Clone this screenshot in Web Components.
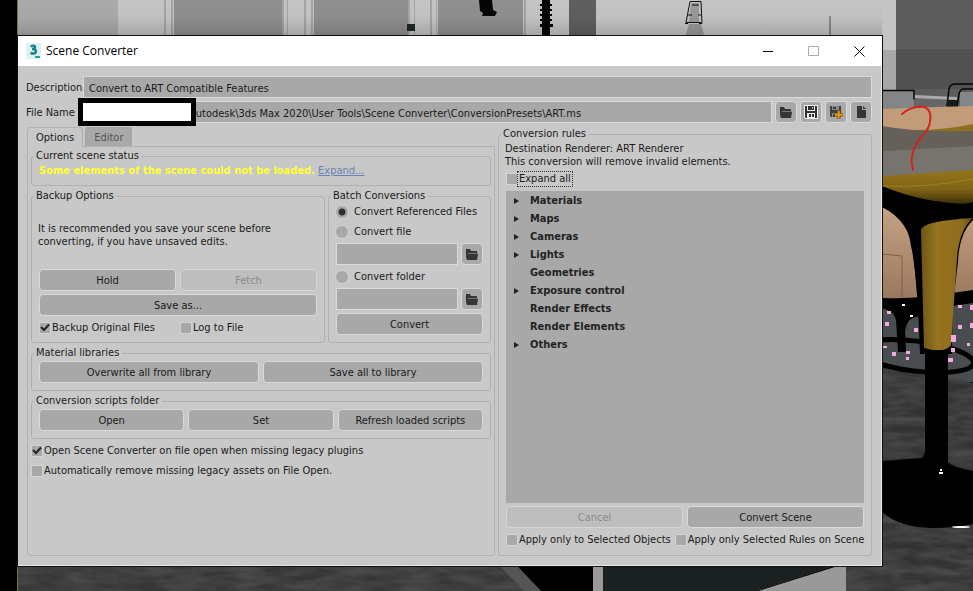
<!DOCTYPE html>
<html lang="en">
<head>
<meta charset="utf-8">
<title>Scene Converter</title>
<style>
html, body { height: 100%; }
body { margin: 0; background: #000; color: #1a1a1a; font: 11px/14px "DejaVu Sans Condensed", "DejaVu Sans", "Liberation Sans", sans-serif; }
</style>
</head>
<body>
<scene-desktop>
  <scene-window heading="Scene Converter">
    <converter-form></converter-form>
  </scene-window>
</scene-desktop>
<script>
function define(name, html, setup) {
  const template = document.createElement('template');
  template.innerHTML = '<style>*{box-sizing:border-box}</style>' + html;
  customElements.define(name, class extends HTMLElement {
    connectedCallback() {
      if (this.shadowRoot) return;
      this.attachShadow({ mode: 'open' }).append(template.content.cloneNode(true));
      if (setup) setup(this, this.shadowRoot);
    }
  });
}

/* Rendered viewport behind the dialog */
define('viewport-backdrop', `
<style>
:host { display: block; overflow: hidden; }
svg { display: block; width: 100%; height: 100%; }
</style>
<svg viewBox="0 0 973 591" preserveAspectRatio="xMinYMin slice" aria-hidden="true">
  <defs>
    <linearGradient id="shade" x2="0" y2="1"><stop offset="0" stop-opacity="0"/><stop offset=".5" stop-opacity=".02"/><stop offset="1" stop-opacity=".16"/></linearGradient>
    <linearGradient id="leg"><stop offset="0" stop-color="#6e5617"/><stop offset=".3" stop-color="#95731f"/><stop offset=".8" stop-color="#8d6c1c"/><stop offset="1" stop-color="#5e4812"/></linearGradient>
    <linearGradient id="seat" x2="0" y2="1"><stop offset="0" stop-color="#94741c"/><stop offset=".55" stop-color="#806316"/><stop offset="1" stop-color="#3a2c0a"/></linearGradient>
    <linearGradient id="wood" x2="0" y2="1"><stop offset="0" stop-color="#c6a283"/><stop offset="1" stop-color="#9a785e"/></linearGradient>
    <filter id="stone" x="0" y="0" width="100%" height="100%">
      <feTurbulence type="fractalNoise" baseFrequency=".03 .12" numOctaves="4" seed="8"/>
      <feColorMatrix values="0 0 0 0 .08  0 0 0 0 .08  0 0 0 0 .08  1.6 0 0 0 -.45"/>
      <feComposite in2="SourceGraphic" operator="in"/>
    </filter>
  </defs>
  <rect width="973" height="591" fill="#000"/>
  <path fill="#c4c4c4" d="M18 0h878v110H18z"/>
  <path fill="#aaa" d="M18 0h100v40H18z"/>
  <path fill="#8f8f8f" d="M174 0h108v40H174zM314 0h94v40h-94zM438 0h85v40h-85z"/>
  <path fill="#a4a4a4" d="M164 0h2v40h-2zM171 0h2v40h-2zM282 0h2v40h-2zM287 0h1v40h-1zM304 0h2v40h-2zM311 0h2v40h-2zM408 0h2v40h-2zM414 0h1v40h-1zM430 0h2v40h-2zM436 0h1v40h-1zM524 0h2v40h-2z"/>
  <path fill="#5f5f5f" d="M569 0h27v40h-27z"/>
  <rect x="407" y="24" width="8" height="7" fill="#1f2b22"/>
  <path fill="#050505" d="M479 0h13l1 10 4 2-2 4h-13l1-3-3-2zM542 0h8v24h3v3h-3v10h-8V27h-2v-3h2z"/>
  <path stroke="#050505" stroke-width="2" d="M540 5h12M540 10h12M540 15h12M540 20h12"/>
  <path fill="#999" d="M689 24h12l4 14h-20z"/>
  <path fill="#999" d="M691 3h8v19h-10z"/>
  <path fill="none" stroke="#111" d="M690 1.500h11l1 22M690 1.500l-4 21h15M688 15h4m6 0h3M692 5h7M685 23.500h3m11 0h3"/>
  <path fill="#888" d="M829 16h2v21h-2z"/>
  <path fill="#5d5d5d" d="M896 0h77v110h-77z"/>
  <path fill="#515151" d="M896 49h77v40h-77z"/>
  <path fill="#a8a8a8" d="M882 50h14v40h-14z"/>
  <path fill="url(#shade)" d="M18 0h864v36H18z"/>
  <path fill="#77773f" d="M17 0h1v591h-1z"/>
  <path fill="#838586" d="M882 91h32v18h-32zM960 92h13v18h-13z"/>
  <path fill="#666" d="M914 97h45v12h-45z"/>
  <path fill="#aaa" d="M914 95l43 2v3l-43-2z"/>
  <path fill="none" stroke="#050505" stroke-width="1.500" d="M882 90.500h32v9M947 106l2-17q1-5 6-5h18M957 107l2-13q1-5 5-5h9"/>
  <path fill="#191919" d="M947 100h10v7h-10z"/>
  <path fill="#c19b7a" d="M882 109q45-2 91-3v20q-40 9-60 5l-31-4z"/>
  <path fill="#8d701f" d="M915 130q30 0 58-6v14h-58z"/>
  <path fill="#66605a" d="M882 126q38 7 91 5v30l-91 0z"/>
  <path fill="#77736e" d="M882 151l91-5v27l-91 5z"/>
  <path fill="url(#seat)" d="M882 176l91-6v35q-45 0-91-19z"/>
  <path fill="none" stroke="#a08022" d="M882 186q45 2 91-7"/>
  <path d="M882 187q45 17 91 17v16l-91 5z"/>
  <path fill="#494d50" d="M882 300h91v82h-91z"/>
  <path fill="url(#wood)" d="M882 207q28 14 31 45l5 48-35-2zM973 220q-14 14-15 42l-4 33 19-3z"/>
  <path fill="none" stroke="#796150" d="M882 254l20 2v44"/>
  <path fill="#000" d="M882 299l42-2v20q-17-3-19 15l1 20h-8l-2-32q-2-9-14-12zM952 293l21-3v13l-21 3z"/>
  <path fill="#333" d="M882 364l91 19v208h-91z"/>
  <path fill="#333" filter="url(#stone)" d="M882 364l91 19v208h-91z"/>
  <ellipse cx="915" cy="356" rx="59" ry="15" fill="none" stroke="#000" stroke-width="5" transform="rotate(7 915 356)"/>
  <path d="M882 190l51 22 40-10v18q-18 12-20 40l-1 94h-32q-3-84-9-108-4-31-29-40z"/>
  <path fill="url(#leg)" d="M921 230q1-9 52-12-14 12-16 40l-6 87q-6 9-27 3z"/>
  <path d="M925 350h23v112q4 5 25 9v53q-64 12-91-12v-51l39-3q4-2 4-8z"/>
  <path fill="#f2aadf" d="M885 322h4v4h-4zM887 311h4v3h-4zM914 328h4v4h-4zM892 352h4v4h-4zM906 351h4v3h-4zM906 357h3v3h-3zM958 305h4v3h-4zM970 305h3v5h-3zM958 325h4v4h-4zM970 323h3v5h-3zM951 335h5v7h-5zM967 343h3v3h-3zM951 348h4v4h-4zM948 358h5v4h-5zM883 346h4v2h-4z"/>
  <path fill="#fff" d="M902 304h3v2h-3zM910 315h3v2h-3zM940 469h2v2h-2zM939 472h4v2h-4z"/>
  <ellipse cx="961" cy="527" rx="9" ry="1" fill="#fff"/>
  <path fill="none" stroke="#d3241b" stroke-width="2" stroke-linecap="round" d="M902 114q10-9 22-7c8 2 8 14 3 23-5 6-9 10-13 19-3 9-3 12-1 21"/>
  <path fill="#373737" d="M18 566h499l24 25H18zM845 566h40v25h-40z"/>
  <path fill="#333" filter="url(#stone)" d="M18 566h499l24 25H18zM845 566h40v25h-40z"/>
  <path fill="#555" d="M500 566h17l24 25h-17z"/>
  <path fill="#000" d="M518 566h76v25h-52z"/>
  <path fill="#999" d="M593 566h10v25h-10zM758 591l80-25h8v25z"/>
  <path fill="#1b2021" d="M603 566h232l-77 25H603z"/>
</svg>`);

define('scene-desktop', `
<style>
:host { display: block; position: relative; min-height: 100%; }
viewport-backdrop { position: absolute; inset: 0; }
.area { position: relative; min-height: 100vh; padding: 35px 90px 24px 17px; display: flex; }
.area ::slotted(*) { flex: 1; min-width: 0; }
</style>
<viewport-backdrop></viewport-backdrop>
<div class="area"><slot></slot></div>`);

define('scene-window', `
<style>
:host { display: flex; flex-direction: column; background: #c8c8c8; border: 1px solid #111; }
header { display: flex; align-items: center; height: 30px; background: #fff; color: #000; padding-left: 8px; flex: none; }
h1 { flex: 1; margin: 0; padding-left: 5px; font: 12px/16px "Open Sans", "Noto Sans", sans-serif; }
button { width: 46px; height: 30px; padding: 0; border: 0; background: none; display: grid; place-items: center; }
svg { display: block; }
main { flex: 1; display: flex; border: 1px solid #e6e6e6; border-width: 0 1px 1px 0; }
main ::slotted(*) { flex: 1; min-width: 0; }
</style>
<header>
  <svg width="15" height="16" viewBox="0 0 15 16" aria-hidden="true"><path fill="#dff1f1" d="M0 0h15v16H0z"/><path fill="none" stroke="#12858a" stroke-width="2.400" d="M4.500 3.500q4.500-2 4.500.500 0 2-3 2 4 0 4 2.500 0 3-5.500 1.500"/><path fill="#25a3a0" d="M9 13h5v2H9z"/></svg>
  <h1></h1>
  <button aria-label="Minimize"><svg width="11" height="11"><path stroke="#000" d="M1 5.500h10"/></svg></button>
  <button aria-label="Maximize" disabled><svg width="11" height="11"><path fill="none" stroke="#aaa" d="M.5.5h10v9h-10z"/></svg></button>
  <button aria-label="Close"><svg width="11" height="11"><path stroke="#000" d="M.5.5l10 10m0-10l-10 10"/></svg></button>
</header>
<main><slot></slot></main>`, (host, root) => {
  root.querySelector('h1').textContent = host.getAttribute('heading');
});

define('ui-button', `
<style>
:host { display: block; min-width: 0; }
button { display: block; width: 100%; height: 22px; padding: 1px 0 0; border: 1px solid #dadada; border-radius: 4px; background: #a8a8a8; color: #1a1a1a; font: inherit; text-align: center; }
button:disabled { background: #bebebe; border-color: #d6d6d6; color: #8a8a8a; }
</style>
<button><slot></slot></button>`, (host, root) => {
  root.querySelector('button').disabled = host.hasAttribute('disabled');
});

const icons = {
  folder: '<path fill="#353535" d="M1 2h4l1 2h6v9H2L1 10z"/><path stroke="#777" fill="none" d="M3 6.500h10"/><path fill="#353535" d="M3 7h10l-1 6H2z"/>',
  save: '<path fill="#eee" d="M0 0h14v14H2l-2-2z"/><path fill="#303030" d="M1 1h12v12H2l-1-1z"/><path fill="#eee" d="M3 1h8v5H3zM3 8h8v5H3z"/><path fill="#303030" d="M4 1h6v4H4z"/><path fill="#bbb" d="M8 2h1v2H8z"/><path fill="#303030" d="M5 9h2v3H5zM8 9h2v3H8z"/>',
  saveas: '<path fill="#404040" d="M1 1h11v11H2l-1-1z"/><path fill="#888" d="M3 1h7v4H3zM3 8h7v4H3z"/><path fill="#404040" d="M4 2h3v2H4zM4 9h2v3H4z"/><path fill="#e39a16" stroke="#76500d" stroke-width=".6" d="M8.500 5.500h2.500v3h3V11h-3v3H8.500v-3h-3V8.500h3z"/>',
  page: '<path fill="#353535" d="M3 1h5v4h4v8H3z"/><path fill="#353535" d="M9 1l3 3H9z"/>'
};
define('icon-button', `
<style>
:host { display: block; flex: none; }
button { display: grid; place-items: center; width: 22px; height: 22px; padding: 0; border: 1px solid #dadada; border-radius: 4px; background: #a8a8a8; }
svg { display: block; }
</style>
<button><svg width="14" height="14" viewBox="0 0 14 14" aria-hidden="true"></svg></button>`, (host, root) => {
  root.querySelector('svg').innerHTML = icons[host.getAttribute('icon')];
  root.querySelector('button').setAttribute('aria-label', host.getAttribute('label'));
});

define('ui-field', `
<style>
:host { display: flex; align-items: center; min-width: 0; }
label { flex: none; width: 57px; padding-top: 2px; color: #1a1a1a; }
label:empty { display: none; }
.box { flex: 1; min-width: 0; display: flex; position: relative; }
input { flex: 1; width: 100%; min-width: 0; height: 22px; padding: 2px 5px 0; border: 1px solid #dadada; border-radius: 0; background: #a8a8a8; color: #1a1a1a; font: inherit; }
:host([masked]) input { padding-left: 105px; }
.mask { position: absolute; left: -5px; top: -3px; width: 118px; height: 28px; border: 5px solid #000; background: #fff; }
:host(:not([masked])) .mask { display: none; }
</style>
<label for="f"></label><div class="box"><input id="f" type="text"><span class="mask"></span></div>`, (host, root) => {
  const input = root.querySelector('input');
  root.querySelector('label').textContent = host.getAttribute('label') || '';
  input.value = host.getAttribute('value') || '';
  if (host.hasAttribute('hint')) input.setAttribute('aria-label', host.getAttribute('hint'));
});

define('ui-check', `
<style>
:host { display: block; }
label { display: flex; align-items: center; height: 14px; }
input { appearance: none; flex: none; width: 12px; height: 12px; margin: 0 1px 0 0; border: 1px solid #d4d4d4; background: #a8a8a8; }
input:checked { background: #a8a8a8 url('data:image/svg+xml,<svg xmlns="http://www.w3.org/2000/svg" viewBox="0 0 10 10"><path d="M1 4l3 3 5-5.500" fill="none" stroke="%23222" stroke-width="2"/></svg>') center/10px 10px; }
:host([type=radio]) input { border-radius: 50%; width: 14px; height: 14px; margin: 0 5px 0 -1px; }
:host([type=radio]) input:checked { background: radial-gradient(circle, #303030 3px, #a8a8a8 4px); }
:host([focused]) span { outline: 1px dotted #333; padding: 0 1px; margin-left: -1px; }
</style>
<label><input><span><slot></slot></span></label>`, (host, root) => {
  const input = root.querySelector('input');
  input.type = host.getAttribute('type') || 'checkbox';
  input.checked = host.hasAttribute('checked');
});

define('ui-group', `
<style>
:host { display: flex; min-width: 0; }
fieldset { flex: 1; display: flex; flex-direction: column; height: 100%; min-width: 0; margin: 0; padding: 0 7px 7px; border: 1px solid #b0b0b0; border-radius: 3px; }
legend { margin-left: -5px; padding: 0 3px 0 2px; height: 14px; color: #1a1a1a; }
</style>
<fieldset><legend></legend><slot></slot></fieldset>`, (host, root) => {
  root.querySelector('legend').textContent = host.getAttribute('legend');
});

define('rule-tree', `
<style>
:host { display: block; background: #a8a8a8; }
ul { list-style: none; margin: 0; padding: 1px 0 0 8px; }
li { display: flex; align-items: center; height: 18px; font-weight: bold; color: #222; }
li::before { content: ""; width: 5px; margin-right: 11px; height: 6px; }
li.branch::before { background: #222; clip-path: polygon(0 0, 100% 50%, 0 100%); }
</style>
<ul></ul>`, (host, root) => {
  const rows = [['Materials', 1], ['Maps', 1], ['Cameras', 1], ['Lights', 1], ['Geometries', 0], ['Exposure control', 1], ['Render Effects', 0], ['Render Elements', 0], ['Others', 1]];
  for (const [name, branch] of rows) {
    const li = document.createElement('li');
    li.textContent = name;
    if (branch) li.className = 'branch';
    root.querySelector('ul').append(li);
  }
});

define('options-panel', `
<style>
:host { display: flex; flex-direction: column; min-width: 0; }
nav { display: flex; height: 19px; flex: none; }
nav button { font: inherit; height: 19px; padding: 1px 8px 0; color: #1a1a1a; background: #c8c8c8; border: 1px solid #b0b0b0; border-bottom: 0; border-radius: 4px 4px 0 0; margin-right: 2px; }
nav button:first-child { height: 20px; position: relative; }
nav button + button { background: #a8a8a8; color: #555; border-color: #a8a8a8; border-radius: 2px 2px 0 0; }
.panel { flex: 1; display: flex; flex-direction: column; gap: 3px; padding: 2px 3px 4px; border: 1px solid #b0b0b0; border-radius: 0 0 3px 3px; }
.status { padding: 1px 0 0; }
.status b { color: #ff3; }
.status a { color: #6685b5; }
.split { display: grid; grid-template-columns: minmax(0, 294fr) minmax(0, 163fr); gap: 3px; }
.text { margin: 19px 0 21px -1px; line-height: 13px; white-space: nowrap; }
.row { display: grid; grid-auto-flow: column; grid-auto-columns: 1fr; column-gap: 4px; }
.row.space { margin-bottom: 3px; }
.checks { margin-top: 5px; }
.files { display: flex; gap: 3px; margin: 4px 0 5px; }
.files ui-field { flex: 1; }
.files.last { margin-bottom: 3px; }
.first { margin: 2px 0 6px; }
.libs { margin-top: 1px; }
.foot { display: grid; gap: 6px; padding-top: 2px; }
</style>
<nav role="tablist"><button role="tab" aria-selected="true">Options</button><button role="tab" aria-selected="false">Editor</button></nav>
<div class="panel">
  <ui-group legend="Current scene status"><div class="status"><b>Some elements of the scene could not be loaded.</b> <a href="#expand">Expand...</a></div></ui-group>
  <div class="split">
    <ui-group legend="Backup Options">
      <div class="text">It is recommended you save your scene before<br>converting, if you have unsaved edits.</div>
      <div class="row space"><ui-button>Hold</ui-button><ui-button disabled>Fetch</ui-button></div>
      <ui-button>Save as...</ui-button>
      <div class="row checks"><ui-check checked>Backup Original Files</ui-check><ui-check>Log to File</ui-check></div>
    </ui-group>
    <ui-group legend="Batch Conversions">
      <ui-check type="radio" class="first" checked>Convert Referenced Files</ui-check>
      <ui-check type="radio">Convert file</ui-check>
      <div class="files"><ui-field hint="File path"></ui-field><icon-button icon="folder" label="Browse for file"></icon-button></div>
      <ui-check type="radio">Convert folder</ui-check>
      <div class="files last"><ui-field hint="Folder path"></ui-field><icon-button icon="folder" label="Browse for folder"></icon-button></div>
      <ui-button>Convert</ui-button>
    </ui-group>
  </div>
  <ui-group legend="Material libraries"><div class="row libs"><ui-button>Overwrite all from library</ui-button><ui-button>Save all to library</ui-button></div></ui-group>
  <ui-group legend="Conversion scripts folder"><div class="row libs"><ui-button>Open</ui-button><ui-button>Set</ui-button><ui-button>Refresh loaded scripts</ui-button></div></ui-group>
  <div class="foot">
    <ui-check checked>Open Scene Converter on file open when missing legacy plugins</ui-check>
    <ui-check>Automatically remove missing legacy assets on File Open.</ui-check>
  </div>
</div>`);

define('rules-panel', `
<style>
:host { display: flex; min-width: 0; padding-top: 1px; }
ui-group { flex: 1; }
.text { margin: 1px 0 4px -1px; line-height: 13px; }
rule-tree { flex: 1; margin-top: 5px; }
.row { display: grid; grid-template-columns: 1fr 1fr; gap: 4px; margin: 3px 0 5px; }
.checks { display: flex; gap: 4px; margin-bottom: 1px; white-space: nowrap; }
</style>
<ui-group legend="Conversion rules">
  <div class="text">Destination Renderer: ART Renderer<br>This conversion will remove invalid elements.</div>
  <ui-check focused>Expand all</ui-check>
  <rule-tree></rule-tree>
  <div class="row"><ui-button disabled>Cancel</ui-button><ui-button>Convert Scene</ui-button></div>
  <div class="checks"><ui-check>Apply only to Selected Objects</ui-check><ui-check>Apply only Selected Rules on Scene</ui-check></div>
</ui-group>`);

define('converter-form', `
<style>
:host { display: flex; flex-direction: column; padding: 10px 9px 9px 8px; }
.line { display: flex; gap: 3px; margin-bottom: 3px; }
.line ui-field { flex: 1; }
.cols { flex: 1; display: grid; grid-template-columns: minmax(0, 469fr) minmax(0, 374fr); gap: 3px; }
options-panel { padding: 1px 0 0 1px; }
</style>
<div class="line"><ui-field label="Description" value="Convert to ART Compatible Features"></ui-field></div>
<div class="line">
  <ui-field label="File Name" masked value="Autodesk\\3ds Max 2020\\User Tools\\Scene Converter\\ConversionPresets\\ART.ms"></ui-field>
  <icon-button icon="folder" label="Open preset"></icon-button>
  <icon-button icon="save" label="Save preset"></icon-button>
  <icon-button icon="saveas" label="Save preset as"></icon-button>
  <icon-button icon="page" label="New preset"></icon-button>
</div>
<div class="cols"><options-panel></options-panel><rules-panel></rules-panel></div>`);
</script>
</body>
</html>
